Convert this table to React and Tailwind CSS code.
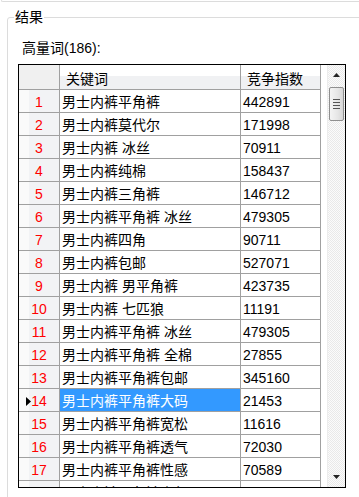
import React from 'react';

const rows = [
  ['男士内裤平角裤', '442891'],
  ['男士内裤莫代尔', '171998'],
  ['男士内裤 冰丝', '70911'],
  ['男士内裤纯棉', '158437'],
  ['男士内裤三角裤', '146712'],
  ['男士内裤平角裤 冰丝', '479305'],
  ['男士内裤四角', '90711'],
  ['男士内裤包邮', '527071'],
  ['男士内裤 男平角裤', '423735'],
  ['男士内裤 七匹狼', '11191'],
  ['男士内裤平角裤 冰丝', '479305'],
  ['男士内裤平角裤 全棉', '27855'],
  ['男士内裤平角裤包邮', '345160'],
  ['男士内裤平角裤大码', '21453'],
  ['男士内裤平角裤宽松', '11616'],
  ['男士内裤平角裤透气', '72030'],
  ['男士内裤平角裤性感', '70589'],
  ['男士内裤平角裤青年', '36120'],
];

const SELECTED = 14;

const Scrollbar = () => (
  <div className="w-[18px] h-full flex flex-col bg-[repeating-conic-gradient(#e9e9e9_0_25%,#fbfbfb_0_50%)] bg-[length:2px_2px] border-l border-[#ececec]">
    <div className="h-[20px] flex items-center justify-center">
      <svg width="7" height="4" viewBox="0 0 7 4"><path d="M3.5 0L7 4H0z" fill="#222" /></svg>
    </div>
    <div className="mt-[2px] mx-[1px] h-[34px] rounded-[2px] border border-[#8f8f8f] bg-[linear-gradient(90deg,#f4f4f4,#e6e6e6_60%,#d6d6d6)] flex flex-col items-center justify-center gap-[2px]">
      <div className="w-[7px] h-[1px] bg-[#555]" />
      <div className="w-[7px] h-[1px] bg-[#555]" />
      <div className="w-[7px] h-[1px] bg-[#555]" />
      <div className="w-[7px] h-[1px] bg-[#555]" />
    </div>
    <div className="flex-1" />
    <div className="h-[20px] flex items-center justify-center">
      <svg width="7" height="4" viewBox="0 0 7 4"><path d="M0 0H7L3.5 4z" fill="#222" /></svg>
    </div>
  </div>
);

const App = () => {
  return (
    <div
      className="w-[359px] h-[497px] overflow-hidden bg-white text-black text-[14px]"
      style={{ fontFamily: '"Liberation Sans", "Noto Sans CJK SC", sans-serif' }}
    >
      <div className="h-[2px] ml-[1px] border-l border-b border-[#dcdcdc] rounded-bl-[2px]" />
      <fieldset className="mt-[7px] ml-[7px] w-[360px] h-[520px] border border-[#dcdcdc] rounded-[3px]">
        <legend className="ml-[6px] px-[1px] leading-[17px]">结果</legend>
        <div className="mt-[12px] pl-[14px] leading-[20px]">高量词(186):</div>
        <div className="mt-[6px] ml-[10px] w-[328px] h-[424px] border border-black flex overflow-hidden">
          <div className="w-[302px] flex flex-col">
            <div className="flex h-[25px] shrink-0 border-b border-[#a0a0a0] bg-[linear-gradient(#ffffff_0_45%,#f0f1f3_45%_100%)]">
              <div className="w-[41px] border-r border-[#a0a0a0] bg-[#f0f0f0]" />
              <div className="w-[181px] border-r border-[#a0a0a0] pl-[6px] pt-[4px] leading-[20px]">关键词</div>
              <div className="w-[80px] border-r border-[#a0a0a0] pl-[6px] pt-[4px] leading-[20px]">竞争指数</div>
            </div>
            {rows.map(([kw, v], i) => {
              const n = i + 1;
              const sel = n === SELECTED;
              return (
                <div key={n} className="flex h-[23px] shrink-0 border-b border-[#a0a0a0]">
                  <div className="w-[41px] border-r border-[#a0a0a0] bg-[linear-gradient(90deg,#fafafa_0_25%,#f2f3f5_25%)] flex items-center pt-[3px]">
                    <div className="w-[12px] flex justify-end">
                      {sel && (
                        <svg width="5" height="9" viewBox="0 0 5 9"><path d="M0 0L5 4.5L0 9z" fill="#000" /></svg>
                      )}
                    </div>
                    <div className="flex-1 text-center pr-[12px] text-[#ff0000]">{n}</div>
                  </div>
                  <div className={`w-[181px] border-r border-[#a0a0a0] pl-[2px] pt-[3px] flex items-center whitespace-nowrap overflow-hidden ${sel ? 'bg-[#3399ff] text-white' : ''}`}>
                    {kw}
                  </div>
                  <div className="w-[80px] border-r border-[#a0a0a0] pl-[2px] pt-[3px] flex items-center">{v}</div>
                </div>
              );
            })}
          </div>
          <div className="w-[6px]" />
          <Scrollbar />
        </div>
      </fieldset>
    </div>
  );
};

export default App;
